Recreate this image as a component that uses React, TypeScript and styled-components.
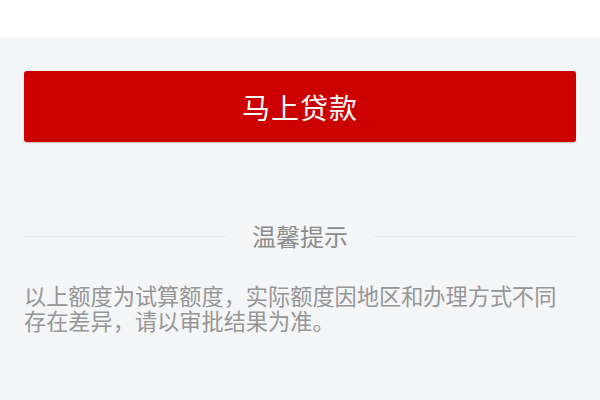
import React from "react";
import styled, { createGlobalStyle } from "styled-components";

const Global = createGlobalStyle`
  html, body {
    margin: 0;
    padding: 0;
    background: #f4f5f7;
    font-family: "Noto Sans CJK SC", "Noto Sans", sans-serif;
  }
`;

const Page = styled.div`
  width: 600px;
  height: 400px;
  overflow: hidden;
  background: #f4f5f7;
  display: flex;
  flex-direction: column;
`;

const Header = styled.div`
  height: 38px;
  background: #ffffff;
  flex-shrink: 0;
`;

const Main = styled.div`
  padding: 33px 24px 0;
  display: flex;
  flex-direction: column;
`;

const LoanButton = styled.button`
  height: 71px;
  width: 100%;
  border: none;
  border-radius: 3px;
  background: #cd0000;
  color: #ffffff;
  font-family: "Noto Sans CJK SC", sans-serif;
  font-size: 28px;
  letter-spacing: 1px;
  display: flex;
  align-items: center;
  justify-content: center;
  padding: 0;
  box-shadow: 0 1px 1px rgba(120, 0, 0, 0.25);
`;

const DividerRow = styled.div`
  margin-top: 79px;
  height: 30px;
  display: flex;
  align-items: center;
  gap: 26px;
`;

const Line = styled.div`
  flex: 1;
  height: 1px;
  background: #e7e8ea;
`;

const DividerTitle = styled.span`
  font-size: 24px;
  line-height: 30px;
  color: #8c8c8c;
`;

const Notice = styled.p`
  margin: 32px 0 0;
  font-size: 22.2px;
  line-height: 25px;
  color: #969696;
`;

export default function App() {
  return (
    <>
      <Global />
      <Page>
        <Header />
        <Main>
          <LoanButton>马上贷款</LoanButton>
          <DividerRow>
            <Line />
            <DividerTitle>温馨提示</DividerTitle>
            <Line />
          </DividerRow>
          <Notice>
            以上额度为试算额度，实际额度因地区和办理方式不同存在差异，请以审批结果为准。
          </Notice>
        </Main>
      </Page>
    </>
  );
}
